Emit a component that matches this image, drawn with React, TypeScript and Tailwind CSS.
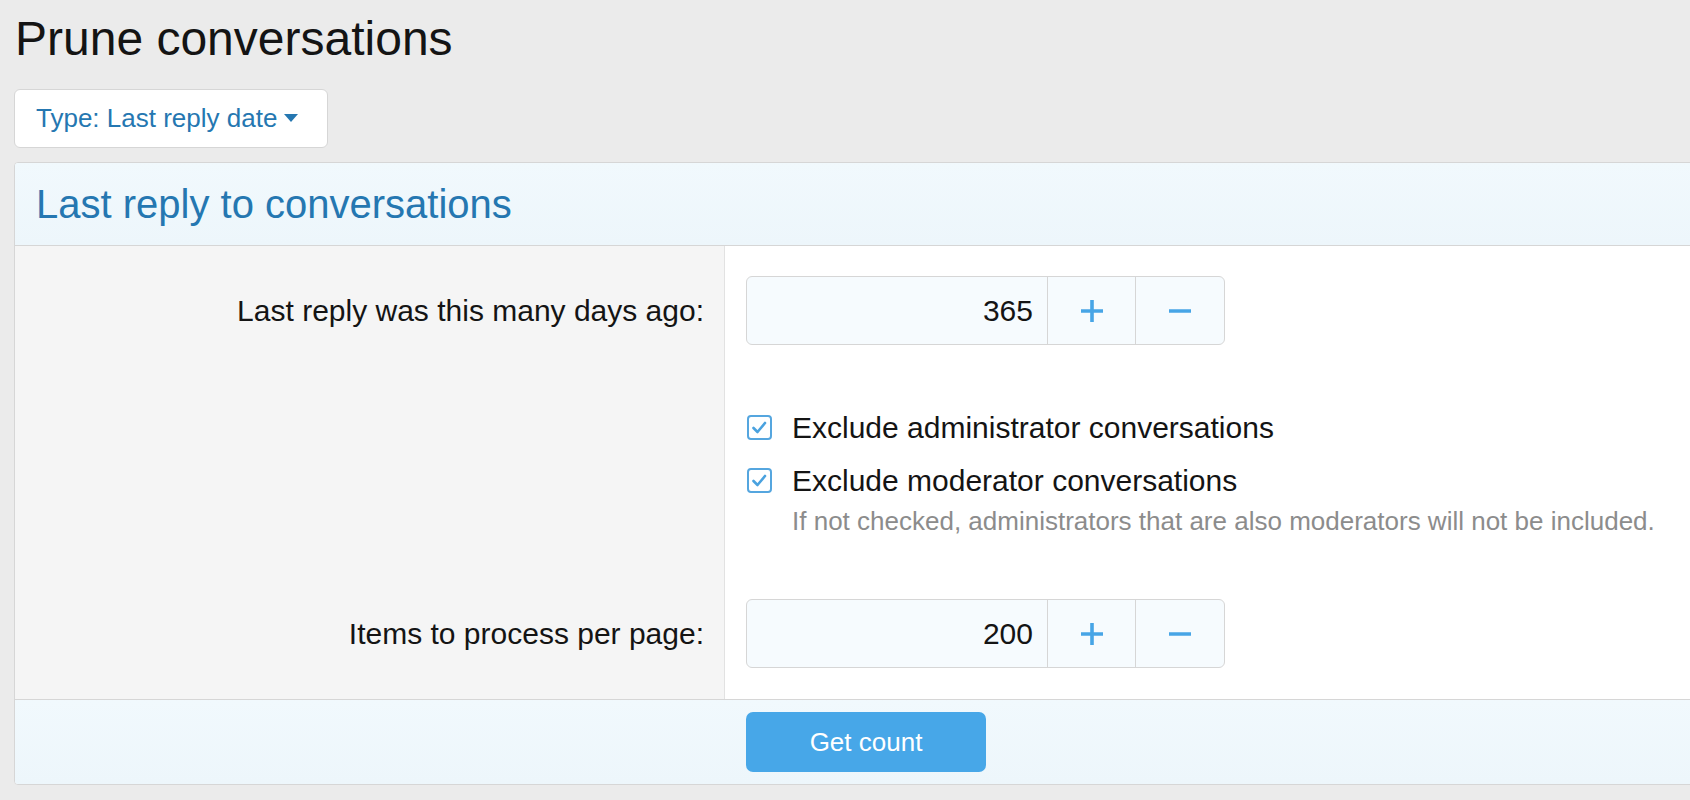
import React from "react";

function Plus() {
  return (
    <svg width="24" height="24" viewBox="0 0 24 24" aria-hidden="true">
      <line x1="12" y1="1" x2="12" y2="23" stroke="#47a5e6" strokeWidth="3.6" />
      <line x1="1" y1="12" x2="23" y2="12" stroke="#47a5e6" strokeWidth="3.6" />
    </svg>
  );
}

function Minus() {
  return (
    <svg width="24" height="24" viewBox="0 0 24 24" aria-hidden="true">
      <line x1="1" y1="12" x2="23" y2="12" stroke="#47a5e6" strokeWidth="3.6" />
    </svg>
  );
}

function NumberBox({ value }: { value: string }) {
  return (
    <div className="flex h-[69px] w-[479px] rounded-[6px] border border-[#d6d6d6] bg-[#f6fbfe] overflow-hidden">
      <div className="flex flex-1 items-center justify-end pr-[14px] text-[30px] text-[#141414]">
        {value}
      </div>
      <div className="flex w-[88px] items-center justify-center border-l border-[#d6d6d6]">
        <Plus />
      </div>
      <div className="flex w-[89px] items-center justify-center border-l border-[#d6d6d6]">
        <Minus />
      </div>
    </div>
  );
}

function Check() {
  return (
    <div className="flex h-[25px] w-[25px] shrink-0 items-center justify-center rounded-[4px] border-[2.5px] border-[#55a6df] bg-white">
      <svg width="17" height="17" viewBox="0 0 17 17" aria-hidden="true">
        <polyline points="2.5,9 6.5,13 14,4" fill="none" stroke="#4aa2df" strokeWidth="2.6" strokeLinecap="round" strokeLinejoin="round" />
      </svg>
    </div>
  );
}

export default function App() {
  return (
    <div className="min-h-[800px] w-full overflow-hidden bg-[#ebebeb] font-['Liberation_Sans',Arial,sans-serif]">
      <div className="pl-[14px] pt-[15px]">
        <h1 className="text-[48px] leading-[48px] text-[#141414] pl-px">Prune conversations</h1>

        <div className="mt-[26px]">
          <button className="flex h-[59px] w-[314px] items-center rounded-[6px] border border-[#d6d6d6] bg-white pl-[21px] text-[26px] text-[#2577b1]">
            <span>Type: Last reply date</span>
            <svg className="ml-[7px]" width="14" height="9" viewBox="0 0 14 9" aria-hidden="true">
              <polygon points="0,0 14,0 7,8" fill="#2577b1" />
            </svg>
          </button>
        </div>

        <div className="mt-[14px] w-[1720px] rounded-[4px] border border-[#d6d6d6] bg-white overflow-hidden">
          <div className="flex h-[83px] items-center border-b border-[#d6d6d6] bg-gradient-to-b from-[#f1f9fd] to-[#edf6fb] pl-[21px]">
            <h2 className="text-[40px] leading-[48px] text-[#2577b1]">Last reply to conversations</h2>
          </div>

          <div className="flex">
            <div className="flex w-[710px] shrink-0 items-center justify-end border-r border-[#e2e2e2] bg-[#f5f5f5] pr-[20px] pt-[30px] pb-[30px] text-[30px] text-[#141414]">
              Last reply was this many days ago:
            </div>
            <div className="pl-[21px] pt-[30px] pb-[30px]">
              <NumberBox value="365" />
            </div>
          </div>

          <div className="flex">
            <div className="w-[710px] shrink-0 border-r border-[#e2e2e2] bg-[#f5f5f5]" />
            <div className="pl-[22px] pt-[32px] pb-[31px]">
              <label className="flex h-[40px] items-center gap-[20px] text-[30px] text-[#141414]">
                <Check />
                <span>Exclude administrator conversations</span>
              </label>
              <label className="mt-[13px] flex h-[40px] items-center gap-[20px] text-[30px] text-[#141414]">
                <Check />
                <span>Exclude moderator conversations</span>
              </label>
              <div className="ml-[45px] mt-[4px] h-[34px] text-[26px] leading-[34px] text-[#8c8c8c]">
                If not checked, administrators that are also moderators will not be included.
              </div>
            </div>
          </div>

          <div className="flex">
            <div className="flex w-[710px] shrink-0 items-center justify-end border-r border-[#e2e2e2] bg-[#f5f5f5] pr-[20px] pt-[30px] pb-[31px] text-[30px] text-[#141414]">
              Items to process per page:
            </div>
            <div className="pl-[21px] pt-[30px] pb-[31px]">
              <NumberBox value="200" />
            </div>
          </div>

          <div className="flex h-[85px] items-center border-t border-[#d6d6d6] bg-gradient-to-b from-[#f1f9fd] to-[#edf6fb] pl-[731px]">
            <button className="h-[60px] w-[240px] rounded-[7px] bg-[#47a7e8] text-[26px] text-white">
              Get count
            </button>
          </div>
        </div>
      </div>
    </div>
  );
}
